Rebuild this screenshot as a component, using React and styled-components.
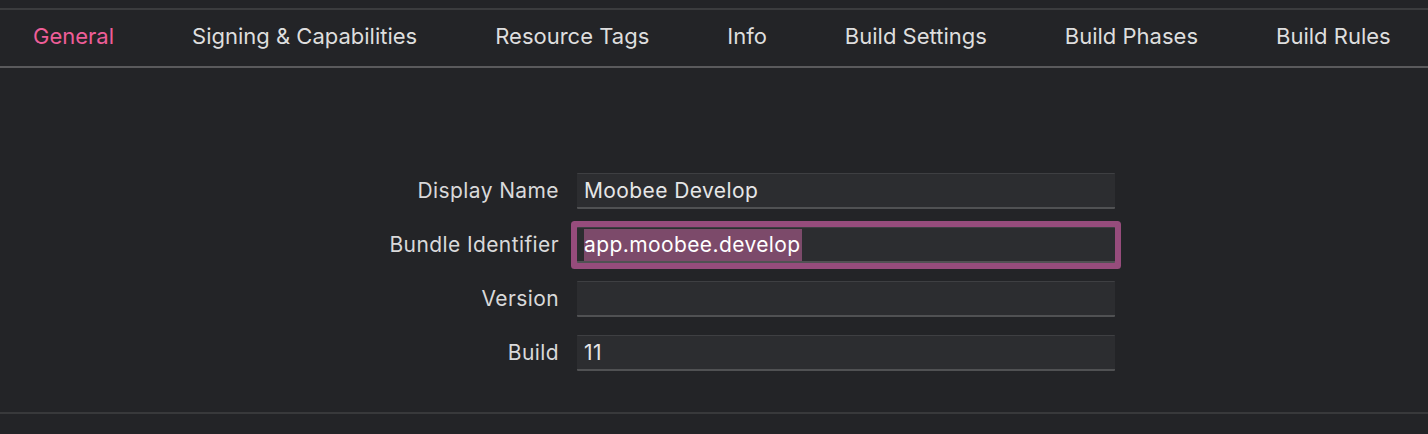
import React from "react";
import styled, { createGlobalStyle } from "styled-components";

const GlobalStyle = createGlobalStyle`
  html, body {
    margin: 0;
    padding: 0;
    background: #232427;
  }
  body {
    font-family: Inter, "Noto Sans", sans-serif;
    -webkit-font-smoothing: antialiased;
  }
`;

const Page = styled.div`
  width: 1428px;
  height: 434px;
  background: #232427;
  padding-top: 8px;
  box-sizing: border-box;
  overflow: hidden;
`;

const TabBar = styled.div`
  display: flex;
  align-items: center;
  height: 56px;
  padding-left: 33px;
  gap: 78px;
  border-top: 2px solid #3b3c3e;
  border-bottom: 2px solid #5a5a5c;
`;

const Tab = styled.div`
  font-size: 22px;
  line-height: 1;
  margin-top: -4px;
  color: ${(p) => (p.active ? "#ee5e98" : "#dedede")};
  white-space: nowrap;
`;

const Content = styled.div`
  height: 346px;
  border-bottom: 2px solid #38393b;
  padding-top: 105px;
  box-sizing: border-box;
`;

const Form = styled.div`
  display: grid;
  grid-template-columns: 559px 538px;
  column-gap: 18px;
  row-gap: 18px;
`;

const Label = styled.div`
  text-align: right;
  font-size: 21px;
  letter-spacing: 0.4px;
  line-height: 36px;
  color: #d9d9da;
`;

const Field = styled.div`
  height: 36px;
  box-sizing: border-box;
  background: #2c2d30;
  border-top: 1px solid #3e3f42;
  border-bottom: 2px solid #505153;
  padding-left: 7px;
  display: flex;
  align-items: center;
  font-size: 21px;
  letter-spacing: 0.4px;
  color: #e6e6e7;
  border-radius: 1px;
  box-shadow: ${(p) => (p.focused ? "0 0 0 6px #964c7c" : "none")};
`;

const Selected = styled.span`
  background: #7c4a6a;
  color: #ffffff;
  padding: 3px 1px 4px 0;
`;

const rows = [
  { label: "Display Name", value: "Moobee Develop" },
  { label: "Bundle Identifier", value: "app.moobee.develop", focused: true },
  { label: "Version", value: "" },
  { label: "Build", value: "11" },
];

const tabs = [
  "General",
  "Signing & Capabilities",
  "Resource Tags",
  "Info",
  "Build Settings",
  "Build Phases",
  "Build Rules",
];

export default function App() {
  return (
    <Page>
      <GlobalStyle />
      <TabBar>
        {tabs.map((t, i) => (
          <Tab key={t} active={i === 0}>
            {t}
          </Tab>
        ))}
      </TabBar>
      <Content>
        <Form>
          {rows.map((r) => (
            <React.Fragment key={r.label}>
              <Label>{r.label}</Label>
              <Field focused={r.focused}>
                {r.focused ? <Selected>{r.value}</Selected> : r.value}
              </Field>
            </React.Fragment>
          ))}
        </Form>
      </Content>
    </Page>
  );
}
